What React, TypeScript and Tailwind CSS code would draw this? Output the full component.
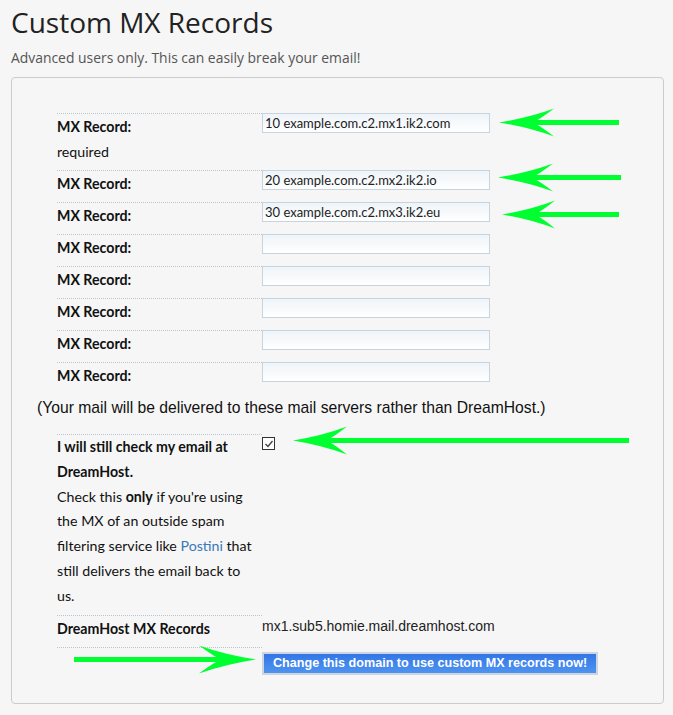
import React from "react";

const labelFont = { fontFamily: "Lato, 'Open Sans', sans-serif" } as React.CSSProperties;

function Arrow({ x, y, len, head, hw, flip }: { x: number; y: number; len: number; head: number; hw: number; flip?: boolean }) {
  const t = 2.6;
  const notch = head * 0.7;
  const d = `M0,0 Q${head * 0.55},${-hw * 0.35} ${head},${-hw} Q${notch + 4},${-t - 2} ${notch},${-t} L${len},${-t} L${len},${t} L${notch},${t} Q${notch + 4},${t + 2} ${head},${hw} Q${head * 0.55},${hw * 0.35} 0,0 Z`;
  return <path d={d} fill="#00ff30" transform={`translate(${x},${y}) scale(${flip ? -1 : 1},1)`} />;
}

function Row({ label, children, extra }: { label?: React.ReactNode; children?: React.ReactNode; extra?: React.ReactNode }) {
  return (
    <div className="flex ml-[20px]">
      <div className="w-[205px] shrink-0 border-t border-dotted border-[#b9c6d2] pb-[6px] leading-[25px] text-[14.2px] text-[#111]" style={labelFont}>
        <div className="font-bold">{label}</div>
        {extra}
      </div>
      <div className="flex-1">{children}</div>
    </div>
  );
}

function Field({ value }: { value?: string }) {
  return (
    <div
      className="w-[228px] h-[20px] border border-[#c7d3dd] bg-linear-to-b from-[#eef4f9] to-white px-[2px] text-[13px] leading-[18px] text-[#222]"
      style={labelFont}
    >
      {value}
    </div>
  );
}

export default function App() {
  const values = ["10 example.com.c2.mx1.ik2.com", "20 example.com.c2.mx2.ik2.io", "30 example.com.c2.mx3.ik2.eu", "", "", "", "", ""];
  return (
    <div className="relative w-[673px] min-h-[715px] bg-[#f6f6f6] pl-[11px] pt-[4px]">
      <h1 className="text-[28px] leading-[36px] text-[#222]" style={{ fontFamily: "'Open Sans', sans-serif" }}>
        Custom MX Records
      </h1>
      <p className="mt-[8px] text-[13.9px] leading-[20px] text-[#555]" style={{ fontFamily: "'Open Sans', sans-serif" }}>
        Advanced users only. This can easily break your email!
      </p>
      <div className="mt-[9px] w-[653px] h-[627px] border border-[#cccccc] rounded-[4px] pt-[35px] px-[25px]">
        {values.map((v, i) => (
          <Row
            key={i}
            label="MX Record:"
            extra={i === 0 ? <div className="font-normal">required</div> : undefined}
          >
            <Field value={v} />
          </Row>
        ))}
        <p className="h-[28px] leading-[28px] text-[15.7px] text-[#111] mb-[12px]" style={{ fontFamily: "'Liberation Sans', Arial, sans-serif" }}>
          (Your mail will be delivered to these mail servers rather than DreamHost.)
        </p>
        <div className="flex ml-[20px]">
          <div className="w-[205px] shrink-0 border-t border-dotted border-[#b9c6d2] pb-[6px] leading-[24.8px] text-[14.2px] text-[#111]" style={labelFont}>
            <div className="font-bold">
              I will still check my email at
              <br />
              DreamHost.
            </div>
            <div>
              Check this <b>only</b> if you're using
              <br />
              the MX of an outside spam
              <br />
              filtering service like <span className="text-[#3a78b8]">Postini</span> that
              <br />
              still delivers the email back to
              <br />
              us.
            </div>
          </div>
          <div className="flex-1 pt-[3px]">
            <span className="flex items-center justify-center w-[13px] h-[13px] border-[1.5px] border-[#333] bg-white">
              <svg width="10" height="10" viewBox="0 0 10 10">
                <path d="M1.5,5 L4,7.5 L8.5,2" fill="none" stroke="#444" strokeWidth="1.4" />
              </svg>
            </span>
          </div>
        </div>
        <Row label="DreamHost MX Records">
          <div className="text-[14px] leading-[22px] text-[#222]" style={{ fontFamily: "'Liberation Sans', Arial, sans-serif" }}>
            mx1.sub5.homie.mail.dreamhost.com
          </div>
        </Row>
        <div className="flex ml-[20px]">
          <div className="w-[205px] shrink-0 border-t border-dotted border-[#b9c6d2] h-[26px]" />
          <div className="flex-1 pt-[2px]">
            <button
              className="w-[336px] h-[23px] border-2 border-[#cfd5de] bg-linear-to-b from-[#3276e6] to-[#4f93f0] text-left pl-[9px] text-[12.6px] font-bold text-white leading-[19px]"
              style={{ fontFamily: "'Liberation Sans', Arial, sans-serif" }}
            >
              Change this domain to use custom MX records now!
            </button>
          </div>
        </div>
      </div>
      <svg className="absolute left-0 top-0 pointer-events-none" width="673" height="715">
        <Arrow x={499} y={122.5} len={120} head={55} hw={14} />
        <Arrow x={498} y={177.5} len={123} head={55} hw={14} />
        <Arrow x={502} y={214.5} len={117} head={53} hw={14} />
        <Arrow x={293} y={440.5} len={336} head={54} hw={14} />
        <Arrow x={256} y={659.5} len={182} head={57} hw={14} flip />
      </svg>
    </div>
  );
}
